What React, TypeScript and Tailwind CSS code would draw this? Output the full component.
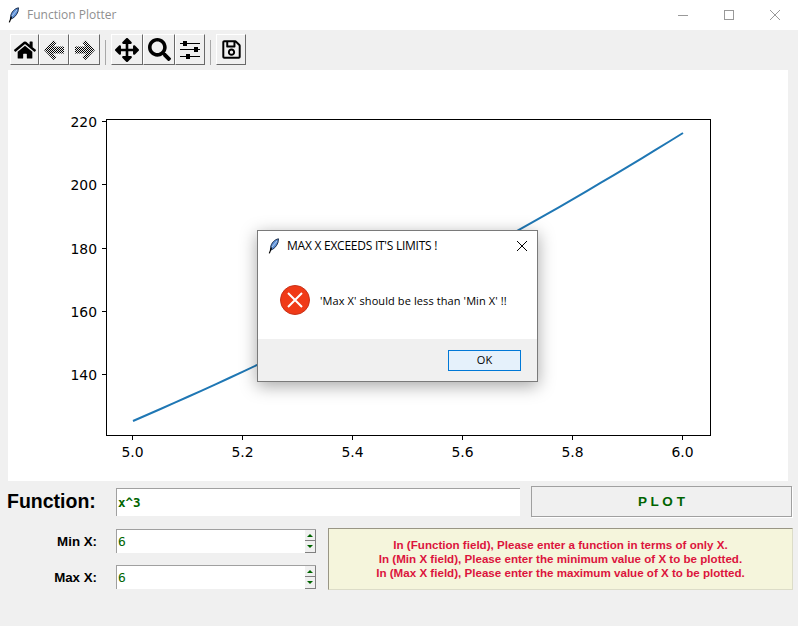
import React from "react";
import { FaHome, FaArrowsAlt, FaSearch, FaRegSave } from "react-icons/fa";

function Feather({ className }: { className?: string }) {
  return (
    <svg viewBox="0 0 12 16" className={className}>
      <path d="M10.5 0.8C6.5 1.5 3.2 5 2.6 9.5L2.4 12.2C5.5 11.5 8.6 8.5 10 4.5Z" fill="#5b8fd6" stroke="#10203c" strokeWidth="0.9" />
      <path d="M9 3L3.6 9.5" stroke="#dbe8fa" strokeWidth="0.7" />
      <path d="M3.6 9.5L1.3 15.4" stroke="#000" strokeWidth="1.2" />
    </svg>
  );
}

function Btn({ children, w }: { children: React.ReactNode; w: string }) {
  return (
    <div className={`${w} h-[31px] flex items-center justify-center bg-[#f0f0f0] border border-t-white border-l-white border-r-[#696969] border-b-[#696969]`}>
      {children}
    </div>
  );
}

function Stipple({ flip, id }: { flip?: boolean; id: string }) {
  return (
    <svg width="24" height="24" viewBox="0 0 24 24" className={flip ? "-scale-x-100" : ""}>
      <defs>
        <pattern id={id} width="2" height="2" patternUnits="userSpaceOnUse">
          <rect width="1" height="1" fill="#000" />
          <rect x="1" y="1" width="1" height="1" fill="#000" />
        </pattern>
      </defs>
      <path d="M11.5 2L2 12L11.5 22L14.5 19L11 15.5H22V8.5H11L14.5 5Z" fill={`url(#${id})`} />
    </svg>
  );
}

function Sliders() {
  return (
    <svg width="22" height="20" viewBox="0 0 22 20">
      <path d="M1 3.5H21M1 9.5H21M1 16.5H21" stroke="#000" strokeWidth="1.2" />
      <rect x="4" y="1" width="4" height="5" fill="#000" />
      <rect x="15" y="7" width="4" height="5" fill="#000" />
      <rect x="7" y="14" width="4" height="5" fill="#000" />
    </svg>
  );
}

function Sep() {
  return <div className="w-[1px] h-[25px] bg-[#a8a8a8] mx-[5px] self-center" />;
}

const px = (v: number) => 133 + (v - 5) * 550;
const py = (v: number) => 421 - (v - 125) * 3.165;
const points = Array.from({ length: 41 }, (_, i) => {
  const x = 5 + i / 40;
  return `${px(x) - 8},${py(x * x * x) - 70}`;
}).join(" ");

const xTicks = [
  ["5.0", 125],
  ["5.2", 235],
  ["5.4", 345],
  ["5.6", 455],
  ["5.8", 565],
  ["6.0", 675],
] as const;
const yTicks = [
  ["220", 51],
  ["200", 114],
  ["180", 178],
  ["160", 241],
  ["140", 304],
] as const;

function Chart() {
  return (
    <svg width="780" height="411" className="block">
      <rect x="98.5" y="49.5" width="604" height="316" fill="#fff" stroke="#000" strokeWidth="1" />
      <polyline points={points} fill="none" stroke="#1f77b4" strokeWidth="2" />
      {xTicks.map(([t, x]) => (
        <g key={t}>
          <line x1={x - 0.5} x2={x - 0.5} y1={366} y2={370} stroke="#000" />
          <text x={x - 0.5} y={387} textAnchor="middle" fontFamily="'DejaVu Sans', sans-serif" fontSize="13.9" fill="#000">
            {t}
          </text>
        </g>
      ))}
      {yTicks.map(([t, y]) => (
        <g key={t}>
          <line x1={94} x2={98} y1={y + 0.5} y2={y + 0.5} stroke="#000" />
          <text x={89} y={y + 5.5} textAnchor="end" fontFamily="'DejaVu Sans', sans-serif" fontSize="13.9" fill="#000">
            {t}
          </text>
        </g>
      ))}
    </svg>
  );
}

function Spin({ value }: { value: string }) {
  return (
    <div className="w-[200px] h-[24px] flex bg-white border-t border-l border-[#a0a0a0]">
      <input
        readOnly
        value={value}
        className="flex-1 min-w-0 h-full pl-[1px] outline-none bg-white text-[#006400] text-[13px] font-['DejaVu_Sans_Mono',monospace]"
      />
      <div className="w-[11px] flex flex-col">
        <div className="h-[11px] bg-[#f0f0f0] border-r border-b border-[#808080] flex items-center justify-center">
          <div className="w-0 h-0 border-x-[3px] border-x-transparent border-b-[3px] border-b-[#006400]" />
        </div>
        <div className="h-[12px] bg-[#f0f0f0] border-r border-b border-[#808080] flex items-center justify-center">
          <div className="w-0 h-0 border-x-[3px] border-x-transparent border-t-[3px] border-t-[#006400]" />
        </div>
      </div>
    </div>
  );
}

export default function App() {
  return (
    <div className="relative w-[798px] h-[626px] bg-[#f0f0f0] overflow-hidden font-['Liberation_Sans',sans-serif]">
      <div className="h-[30px] bg-white flex items-center">
        <Feather className="w-[12px] h-[16px] ml-[8px]" />
        <span className="ml-[7px] text-[12px] text-[#8f8f8f] font-['Open_Sans',sans-serif]">Function Plotter</span>
        <div className="ml-auto flex items-center">
          <svg width="12" height="12" className="mr-[34px]"><line x1="1" x2="11" y1="6.5" y2="6.5" stroke="#999" /></svg>
          <svg width="12" height="12" className="mr-[34px]"><rect x="1.5" y="1.5" width="9" height="9" fill="none" stroke="#999" /></svg>
          <svg width="12" height="12" className="mr-[17px]"><path d="M1 1L11 11M11 1L1 11" stroke="#999" /></svg>
        </div>
      </div>

      <div className="h-[40px] pl-[10px] pt-[4px] flex">
        <Btn w="w-[29px]"><FaHome size={22} color="#000" /></Btn>
        <Btn w="w-[30px]"><Stipple id="s1" /></Btn>
        <Btn w="w-[31px]"><Stipple id="s2" flip /></Btn>
        <Sep />
        <Btn w="w-[32px]"><FaArrowsAlt size={24} color="#000" /></Btn>
        <Btn w="w-[32px]"><FaSearch size={23} color="#000" /></Btn>
        <Btn w="w-[30px]"><Sliders /></Btn>
        <Sep />
        <Btn w="w-[30px]"><FaRegSave size={21} color="#000" /></Btn>
      </div>

      <div className="mx-[8px] w-[780px] h-[411px] bg-white">
        <Chart />
      </div>

      <div className="mt-[5px] h-[31px] flex items-center pl-[7px]">
        <div className="w-[109px] text-[19.5px] font-bold text-black leading-none">Function:</div>
        <input
          readOnly
          value="x^3"
          className="w-[404px] h-[28px] pl-[1px] bg-white border-t border-l border-[#a0a0a0] outline-none text-[#006400] text-[12.5px] font-bold font-['DejaVu_Sans_Mono',monospace]"
        />
        <div className="ml-[11px] w-[261px] h-[31px] pt-[2px] flex items-center justify-center border border-[#a0a0a0] shadow-[1px_1px_0_#fff] text-[#006400] text-[13.5px] font-bold whitespace-pre">
          P L O T
        </div>
      </div>

      <div className="mt-[11px] flex">
        <div className="w-[328px] pt-[1px] flex flex-col gap-[12px]">
          <div className="flex items-center">
            <div className="w-[97px] pt-[1px] text-right text-[13.3px] font-bold text-black">Min X:</div>
            <div className="ml-[19px]"><Spin value="6" /></div>
          </div>
          <div className="flex items-center">
            <div className="w-[97px] pt-[1px] text-right text-[13.3px] font-bold text-black">Max X:</div>
            <div className="ml-[19px]"><Spin value="6" /></div>
          </div>
        </div>
        <div className="w-[465px] h-[62px] bg-[#f5f5dc] border border-t-[#999685] border-l-[#999685] border-r-[#dcdcc8] border-b-[#dcdcc8] flex flex-col items-center justify-center text-[#dc143c] text-[11.6px] leading-[14px] font-bold">
          <div>In (Function field), Please enter a function in terms of only X.</div>
          <div>In (Min X field), Please enter the minimum value of X to be plotted.</div>
          <div>In (Max X field), Please enter the maximum value of X to be plotted.</div>
        </div>
      </div>

      <div className="absolute left-[257px] top-[230px] w-[281px] h-[152px] bg-white border border-[#7a7a7a] shadow-[0_4px_16px_rgba(0,0,0,0.35)] flex flex-col font-['Open_Sans',sans-serif]">
        <div className="h-[30px] flex items-center">
          <Feather className="w-[12px] h-[16px] ml-[10px]" />
          <span className="ml-[7px] text-[12px] text-black tracking-[-0.25px]">MAX X EXCEEDS IT'S LIMITS !</span>
          <svg width="12" height="12" className="ml-auto mr-[9px]"><path d="M1 1L11 11M11 1L1 11" stroke="#000" /></svg>
        </div>
        <div className="h-[78px] flex items-center pl-[22px]">
          <svg width="30" height="30" viewBox="0 0 30 30">
            <circle cx="15" cy="15" r="14.5" fill="#f03a17" stroke="#c8321a" />
            <path d="M8 8L22 22M22 8L8 22" stroke="#fff" strokeWidth="2" />
          </svg>
          <span className="ml-[10px] pt-[2px] text-[11px] tracking-[0.1px] text-black">'Max X' should be less than 'Min X' !!</span>
        </div>
        <div className="flex-1 bg-[#f0f0f0] flex items-center justify-end pr-[16px]">
          <div className="w-[73px] h-[21px] pt-[1px] bg-[#e5f1fb] border border-[#0078d7] flex items-center justify-center text-[11px] text-black">OK</div>
        </div>
      </div>
    </div>
  );
}
